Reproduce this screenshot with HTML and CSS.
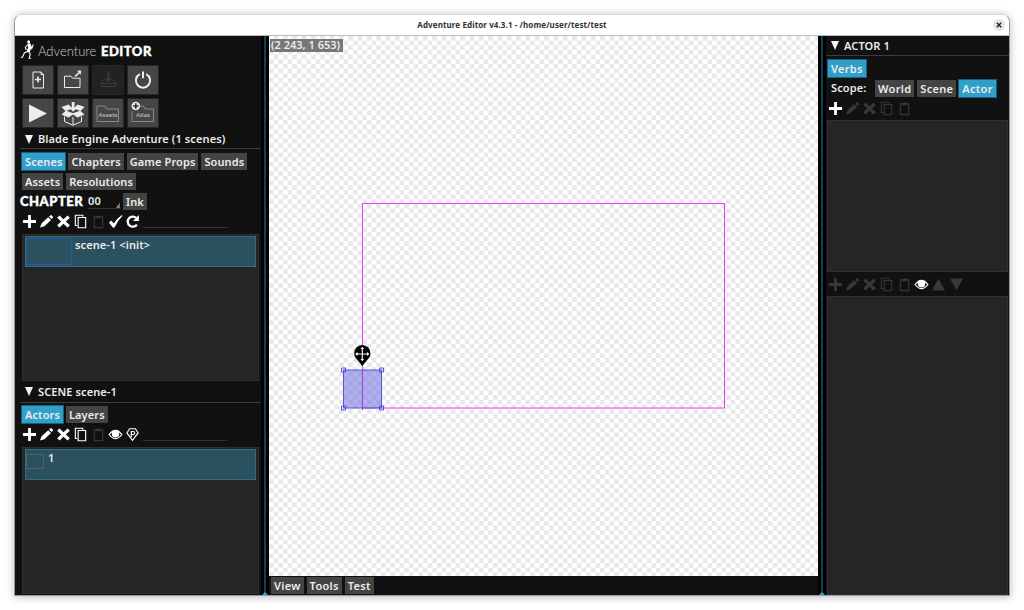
FILE: index.html
```html
<!DOCTYPE html>
<html lang="en">
<head>
  <meta charset="UTF-8">
  <meta name="viewport" content="width=device-width, initial-scale=1.0">
  <title>Adventure Editor</title>
  <link rel="stylesheet" href="styles.css">
</head>
<body>
  <!-- shared toolbar icons -->
  <svg class="defs">
    <symbol id="plus" viewBox="0 0 16 16"><path d="M6.500 1h3v5.500H15v3H9.500V15h-3V9.500H1v-3h5.500z"/></symbol>
    <symbol id="pencil" viewBox="0 0 16 16"><path d="M1 14.500l1.800-4.700 7-6.400 3 3.100-7 6.500zM10.700 2.700l1.500-1.300q.7-.5 1.400.1l1.200 1.300q.5.700-.1 1.300l-1.200 1.300z"/></symbol>
    <symbol id="cross" viewBox="0 0 16 16"><path d="M1.200 3.900L3.800 1.500 8 5.700l4.300-4.200 2.500 2.400L10.500 8l4.300 4.100-2.500 2.400L8 10.300l-4.200 4.200-2.600-2.400L5.500 8z"/></symbol>
    <symbol id="copy" viewBox="0 0 16 16"><path d="M5.500 3.700h8v11h-8zM4.500 12.300h-2v-11h8v1.500" fill="none" stroke="currentColor" stroke-width="1.200"/></symbol>
    <symbol id="paste" viewBox="0 0 16 16"><path d="M3.500 3h9v11.500h-9z" fill="none" stroke="currentColor" stroke-width="1.200"/><path d="M5.500 2.200H7L8 1l1 1.200h1.500v2.300h-5z"/></symbol>
    <symbol id="check" viewBox="0 0 16 16"><path d="M1 9l2.500-2 2.600 3.100Q9.500 4.500 14.800 1l.7.800Q10.300 7 7 14.300H5z"/></symbol>
    <symbol id="reload" viewBox="0 0 16 16"><path d="M12.700 11.300A5.400 5.400 0 1 1 12 4.200" fill="none" stroke="currentColor" stroke-width="2.400"/><path d="M14.800 1v6.500H8.500z"/></symbol>
    <symbol id="eye" viewBox="0 0 16 16"><path d="M1.200 8Q8-1 14.800 8 8 17 1.200 8z" fill="none" stroke="currentColor" stroke-width="1.300"/><circle cx="8" cy="7.200" r="4"/></symbol>
    <symbol id="gem" viewBox="0 0 16 16"><path d="M5 1.800h6l3 4.500-6 8-6-8z" fill="none" stroke="currentColor" stroke-width="1.200"/><path d="M6.700 11V4.800h2a1.600 1.600 0 0 1 0 3.200h-2" fill="none" stroke="currentColor" stroke-width="1.300"/></symbol>
    <symbol id="up" viewBox="0 0 16 16"><path d="M8 1.500l7 13H1z"/></symbol>
    <symbol id="down" viewBox="0 0 16 16"><path d="M8 14.500l7-13H1z"/></symbol>
  </svg>

  <div class="window">
    <div class="titlebar">
      <span class="title">Adventure Editor v4.3.1 - /home/user/test/test</span>
      <button class="close"><svg viewBox="0 0 12 12"><path d="M3.800 3.800l4.400 4.400M8.200 3.800L3.800 8.200"/></svg></button>
    </div>

    <div class="main">
      <div class="left">
        <div class="logo">
          <svg class="runner" viewBox="0 0 16 22">
            <circle cx="8.700" cy="2.700" r="1.500"/>
            <path d="M7.700 4.500l2.300-.2 1.300 4.500-1.500 4.500-3.500-.2 1.700-4z"/>
            <path d="M10 5l1.800 4.500 1.500-4M7.900 5.500L5.300 8.500l1 2.500M7.500 12.500L4.300 14l-1.800 4.300H.7M8.500 12.500l1.800 2.700-1.200 4h2" fill="none" stroke="#fff" stroke-width="1.100"/>
          </svg>
          <span class="thin">Adventure</span>
          <span class="fat">EDITOR</span>
        </div>

        <div class="tools">
          <button><svg viewBox="0 0 32 30"><path class="line" d="M11 7h8l2.500 2.500V23H11zM19 7v2.500h2.500"/><path class="bold" d="M16 11.500v6M13 14.500h6"/></svg></button>
          <button><svg viewBox="0 0 32 30"><path class="line" d="M7.500 22.500V11.200H14l1.500 2H23v9.300z"/><path class="bold" d="M18 11.500l4-3.700"/><path d="M20 5.800l4.200-.3-.5 4.200z"/></svg></button>
          <button class="off"><svg viewBox="0 0 32 30"><path class="line" d="M9 21.500h15v-3H9zM9.500 18.500q1-3.500 4-4.300M23.500 18.500q-1-3.500-4-4.300"/><path class="bold" d="M16.500 6v9"/><path d="M13.300 13.500h6.400L16.500 17z"/></svg></button>
          <button><svg viewBox="0 0 32 30"><path class="power" d="M12.800 9.200a7.100 7.100 0 1 0 6.400 0M16 6.500v6.800"/></svg></button>
          <button><svg viewBox="0 0 32 30"><path d="M7 6.500l18 9-18 9z"/></svg></button>
          <button><svg viewBox="0 0 32 30"><path d="M4.500 9l7-2.500L16 11l4.500-4.500L27.500 9l-4 4 4 3.500-7 3-4.500-3-4.500 3-7-3 4-3.500z"/><path class="line" d="M7.500 18.500v5l8.500 3.700 8.500-3.700v-5M16 19v8"/><path class="cut" d="M9.500 12.800l6.500-2.300 7 2.300-7 2.500z"/><path d="M14.700 4h2.800v6.500H19l-2.900 3.300-2.900-3.300h1.500z"/></svg></button>
          <button><svg viewBox="0 0 32 30"><path class="hair" d="M5 23.500V8h8l1.500 3h12v12.500z"/><text x="16" y="19.200" textLength="19" lengthAdjust="spacingAndGlyphs">Assets</text></svg></button>
          <button><svg viewBox="0 0 32 30"><path class="hair" d="M5 13v10.500h21.500V11H18l-1.500-3H13"/><circle cx="8.800" cy="8" r="4.300"/><path class="hole" d="M8.800 5.200v5.600M6 8h5.600"/><text x="16" y="19.400" textLength="14" lengthAdjust="spacingAndGlyphs">Atlas</text></svg></button>
        </div>

        <div class="heading project-heading"><i class="tri"></i>Blade Engine Adventure (1 scenes)</div>
        <div class="tabs">
          <button class="on">Scenes</button>
          <button>Chapters</button>
          <button>Game Props</button>
          <button>Sounds</button>
          <button>Assets</button>
          <button>Resolutions</button>
        </div>
        <div class="chapter">
          <span class="fat">CHAPTER</span>
          <span class="select">00</span>
          <button>Ink</button>
        </div>
        <div class="icons scene-icons">
          <svg><use href="#plus"/></svg>
          <svg><use href="#pencil"/></svg>
          <svg><use href="#cross"/></svg>
          <svg><use href="#copy"/></svg>
          <svg class="off"><use href="#paste"/></svg>
          <svg><use href="#check"/></svg>
          <svg><use href="#reload"/></svg>
          <span class="filter"></span>
        </div>
        <div class="list scenes">
          <div class="item"><span class="thumb"></span>scene-1 &lt;init&gt;</div>
        </div>

        <div class="heading scene-heading"><i class="tri"></i>SCENE scene-1</div>
        <div class="tabs scene-tabs">
          <button class="on">Actors</button>
          <button>Layers</button>
        </div>
        <div class="icons actor-icons">
          <svg><use href="#plus"/></svg>
          <svg><use href="#pencil"/></svg>
          <svg><use href="#cross"/></svg>
          <svg><use href="#copy"/></svg>
          <svg class="off"><use href="#paste"/></svg>
          <svg><use href="#eye"/></svg>
          <svg><use href="#gem"/></svg>
          <span class="filter"></span>
        </div>
        <div class="list actors">
          <div class="item"><span class="thumb small"></span>1</div>
        </div>
      </div>

      <div class="splitter"></div>

      <div class="center">
        <div class="canvas">
          <span class="coords">(2 243, 1 653)</span>
          <svg class="stage" viewBox="0 0 549 540">
            <rect class="camera" x="93.500" y="167.500" width="362" height="204.500"/>
            <rect class="actor" x="74.500" y="334" width="38" height="38"/>
            <path class="origin" d="M93.500 334v40"/>
            <path class="handle" d="M72.500 332h4v4h-4zM110.500 332h4v4h-4zM72.500 370h4v4h-4zM110.500 370h4v4h-4z"/>
            <path d="M93.300 330l-5.300-6.500a8.200 8.200 0 1 1 10.600 0z"/>
            <path class="move" d="M93.300 311.500v13M87 318h12.500M92 313l1.300-1.500 1.300 1.500M92 323l1.300 1.500 1.300-1.500M88.500 316.700L87 318l1.500 1.300M98 316.700l1.500 1.300-1.500 1.300"/>
          </svg>
        </div>
        <div class="bottom">
          <button>View</button>
          <button>Tools</button>
          <button>Test</button>
        </div>
      </div>

      <div class="splitter"></div>

      <div class="right">
        <div class="heading"><i class="tri"></i>ACTOR 1</div>
        <div class="tabs"><button class="on">Verbs</button></div>
        <div class="scope">
          <span>Scope:</span>
          <button>World</button>
          <button>Scene</button>
          <button class="on">Actor</button>
        </div>
        <div class="icons">
          <svg><use href="#plus"/></svg>
          <svg class="off"><use href="#pencil"/></svg>
          <svg class="off"><use href="#cross"/></svg>
          <svg class="off"><use href="#copy"/></svg>
          <svg class="off"><use href="#paste"/></svg>
        </div>
        <div class="list verbs"></div>
        <div class="icons action-icons">
          <svg class="off"><use href="#plus"/></svg>
          <svg class="off"><use href="#pencil"/></svg>
          <svg class="off"><use href="#cross"/></svg>
          <svg class="off"><use href="#copy"/></svg>
          <svg class="off"><use href="#paste"/></svg>
          <svg><use href="#eye"/></svg>
          <svg class="off"><use href="#up"/></svg>
          <svg class="off"><use href="#down"/></svg>
        </div>
        <div class="list actions"></div>
      </div>
    </div>
  </div>
</body>
</html>
```
FILE: styles.css
```css
*{
  box-sizing: border-box;
}
body{
  margin: 0;
  height: 610px;
  padding: 14px;
  background-color: white;
  overflow: hidden;
  font: 600 11px/16px "Noto Sans", sans-serif;
  letter-spacing: 0.1px;
  color: #ececec;
}
button{
  font: inherit;
  color: inherit;
  letter-spacing: inherit;
  border: none;
  padding: 0;
  margin: 0;
  white-space: nowrap;
}
svg{
  display: block;
}
.defs{
  position: absolute;
  width: 0;
  height: 0;
}
.window{
  width: 996px;
  height: 582px;
  border: 1px solid #999;
  border-top-color: #d8d8d8;
  border-radius: 8px 8px 0 0;
  box-shadow: 0 1px 9px rgba(0, 0, 0, 0.28);
  overflow: hidden;
}
.titlebar{
  height: 21px;
  background-color: white;
  display: grid;
  grid-template-columns: 1fr auto 1fr;
  align-items: center;
  border-bottom: 1px solid #bbb;
}
.title{
  grid-column: 2;
  font: bold 8px/20px "Noto Sans", sans-serif;
  color: #333;
}
.close{
  justify-self: end;
  margin-right: 4px;
  width: 12px;
  height: 12px;
  border-radius: 50%;
  background-color: #e6e6e6;
}
.close path{
  stroke: #222;
  stroke-width: 1.4;
}
.main{
  display: flex;
  height: 559px;
  background-color: #111;
}
.left{
  width: 246px;
  padding-left: 5px;
}
.splitter{
  width: 8px;
  background: linear-gradient(90deg, #000 3px, #0c4254 3px, #0c4254 5px, #000 5px);
  display: flex;
  align-items: flex-end;
}
.splitter::after{
  content: "";
  border: 3px solid transparent;
  border-top: none;
  border-bottom: 3px solid #30a5d0;
  margin-left: 1px;
}

/* logo */
.logo{
  height: 29px;
  padding: 3px 0 0;
  display: flex;
}
.runner{
  width: 16px;
  height: 22px;
  fill: white;
  margin-right: 2px;
}
.thin{
  font: 300 13px/24px Lato, sans-serif;
  letter-spacing: 0;
  width: 63px;
  color: #ccc;
  white-space: nowrap;
}
.fat{
  font: 900 13px/24px Lato, sans-serif;
  letter-spacing: 0.5px;
  color: white;
  -webkit-text-stroke: 0.4px white;
}
.tools{
  display: grid;
  grid-template-columns: repeat(4, 32px);
  grid-auto-rows: 30px;
  gap: 3px;
  padding-left: 2px;
}
.tools button{
  background-color: #464646;
  border: 1px solid #252525;
}
.tools button.off{
  background-color: #222;
  color: #3c3c3c;
}
.tools svg{
  width: 32px;
  height: 30px;
  margin: -1px;
  fill: currentColor;
}
.tools text{
  font: 6px "Noto Sans", sans-serif;
  letter-spacing: 0;
  text-anchor: middle;
  fill: #ccc;
}
.line, .hair, .bold, .power{
  fill: none;
  stroke: currentColor;
}
.hair{
  stroke: #999;
  stroke-width: 0.8;
}
.bold{
  stroke-width: 1.6;
}
.power{
  stroke-width: 2;
}
.tools .cut{
  fill: #464646;
}
.hole{
  stroke: #333;
  stroke-width: 1.7;
}

/* headings and tabs */
.heading{
  height: 21px;
  display: flex;
  align-items: center;
  padding-left: 5px;
  border-bottom: 1px solid #3c3c3c;
}
.project-heading{
  padding-top: 2px;
}
.scene-heading{
  height: 22px;
}
.tri{
  border: 4px solid transparent;
  border-top: 9px solid #f2f2f2;
  border-bottom: none;
  margin-right: 5px;
}
.tabs{
  display: flex;
  flex-wrap: wrap;
  gap: 3px;
  padding: 4px 0 0 2px;
}
.scene-tabs{
  padding-top: 3px;
}
.tabs button, .chapter button, .scope button, .bottom button{
  height: 17px;
  padding: 0 3px;
  line-height: 16px;
  background-color: #444;
}
.tabs .on, .scope .on{
  background-color: #309fc9;
  outline: 1px solid #146080;
}
.chapter{
  display: flex;
  height: 21px;
  padding-top: 3px;
}
.chapter .fat{
  line-height: 16px;
  width: 68px;
}
.select{
  width: 32px;
  height: 16px;
  border-bottom: 1px solid #333;
  background: linear-gradient(135deg, transparent 50%, #777 50%) right bottom / 5px 5px no-repeat;
  margin-right: 3px;
}
.icons{
  display: flex;
  gap: 2.3px;
  padding-left: 1.5px;
  height: 19px;
}
.icons svg{
  width: 15px;
  height: 15px;
  fill: currentColor;
  color: white;
}
.icons svg.off{
  color: #383838;
}
.scene-icons{
  padding-top: 3px;
  height: 23px;
}
.actor-icons{
  padding-top: 4px;
  height: 24px;
}
.filter{
  width: 84px;
  height: 14px;
  border-bottom: 1px solid #333;
}
.list{
  background-color: #252525;
  border: 1px solid #303030;
  margin: 0 2px;
}
.item{
  height: 31px;
  margin: 1px 2px;
  border: 1px solid #2f6f84;
  background-color: #2b505e;
  display: flex;
}
.thumb{
  width: 46px;
  height: 27px;
  border: 1px solid #2a56a8;
  margin: 1px 3px 0 0;
}
.thumb.small{
  width: 18px;
  height: 15px;
  border-color: #456371;
  margin: 4px 4px 0 0;
}
.scenes{
  height: 147px;
}
.actors{
  height: 147px;
}

/* canvas */
.center{
  width: 549px;
}
.canvas{
  height: 540px;
  position: relative;
  background: repeating-conic-gradient(#e8e8e8 0 25%, #fff 0 50%) 0 0 / 9.333px 9.333px;
}
.coords{
  position: absolute;
  top: 3px;
  left: 1px;
  width: 73px;
  height: 13px;
  line-height: 12px;
  padding-left: 1px;
  letter-spacing: 0;
  background-color: #777;
  white-space: nowrap;
}
.stage{
  width: 549px;
  height: 540px;
}
.camera{
  fill: none;
  stroke: #f03cf0;
}
.actor{
  fill: rgba(100, 95, 220, 0.5);
  stroke: #5555d8;
}
.origin{
  stroke: #a040e0;
}
.handle{
  fill: none;
  stroke: #5555d8;
}
.move{
  fill: none;
  stroke: white;
  stroke-width: 1.1;
}
.bottom{
  display: flex;
  gap: 3px;
  padding: 1px 0 0 2px;
}
.bottom button{
  letter-spacing: 0.3px;
}

/* right panel */
.right{
  width: 183px;
}
.right .heading{
  height: 20px;
}
.right .tabs{
  padding-left: 2px;
}
.right .tabs button, .scope button{
  letter-spacing: 0.3px;
}
.scope{
  display: flex;
  gap: 3px;
  padding: 3px 0 0 5px;
  height: 24px;
}
.scope span{
  width: 43px;
  margin-right: -2px;
}
.verbs, .actions{
  margin: 0 1px;
}
.verbs{
  height: 152px;
}
.action-icons{
  padding-top: 5px;
  height: 24px;
}
.actions{
  height: 299px;
}
```
